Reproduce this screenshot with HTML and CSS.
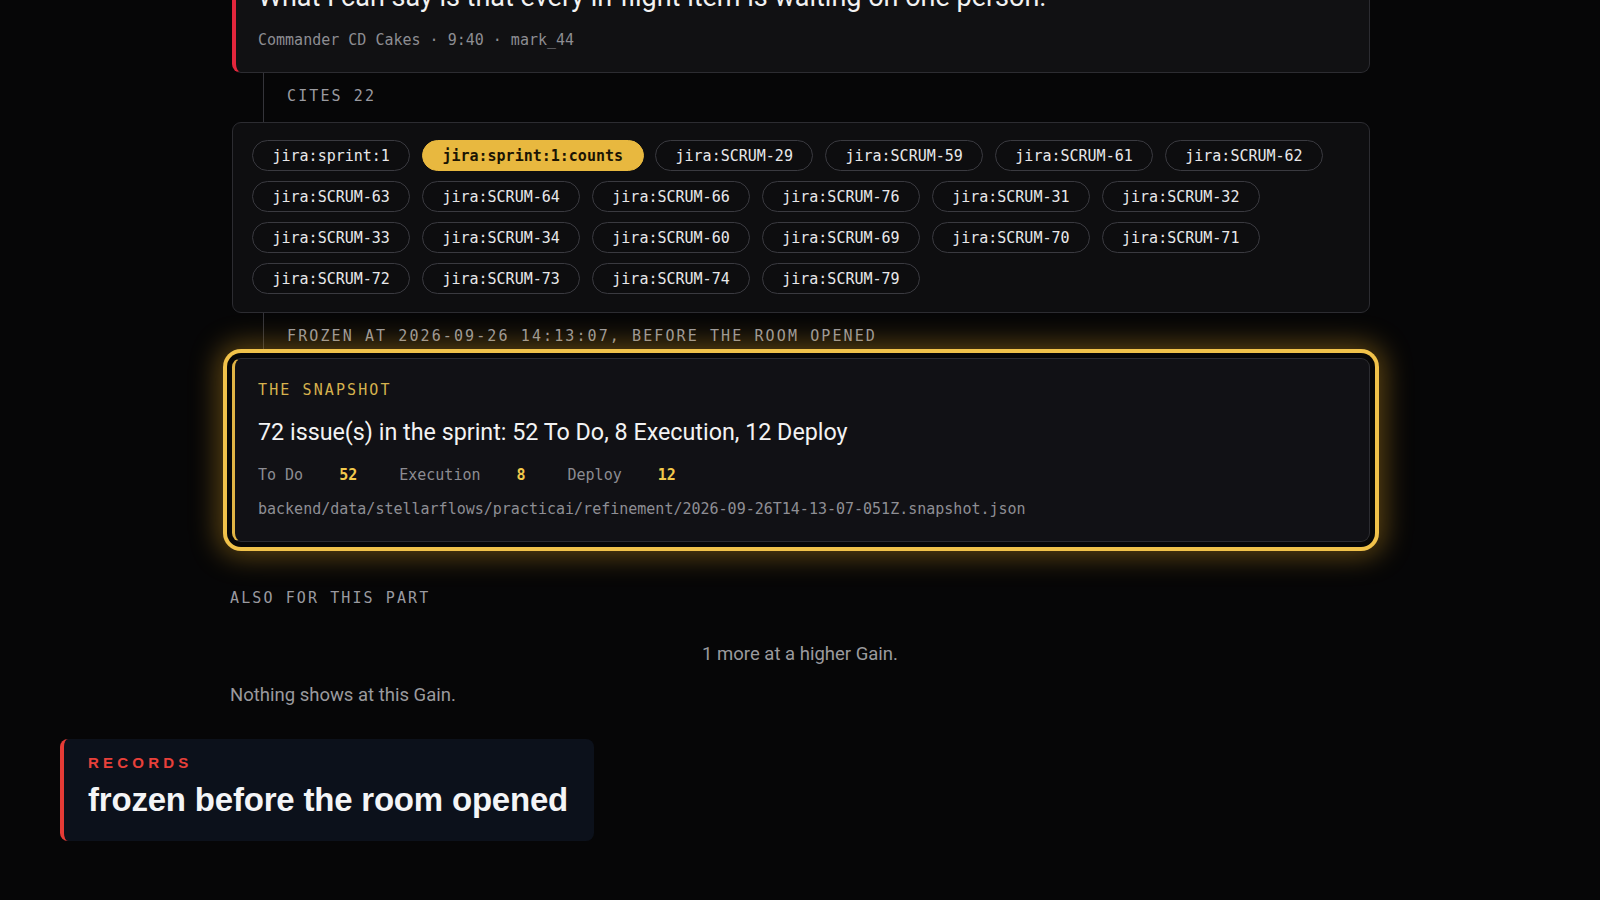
FILE: index.html
```html
<!DOCTYPE html>
<html lang="en">
<head>
<meta charset="utf-8">
<title>Records</title>
<link rel="stylesheet" href="styles.css">
</head>
<body>
<main class="page">
  <article class="card quote">
    <p class="quote-text">What I can say is that every in-flight item is waiting on one person.</p>
    <p class="meta">Commander CD Cakes · 9:40 · mark_44</p>
  </article>

  <div class="thread"><span class="label">CITES 22</span></div>

  <section class="card chips">
    <span class="chip">jira:sprint:1</span>
    <span class="chip chip-on">jira:sprint:1:counts</span>
    <span class="chip">jira:SCRUM-29</span>
    <span class="chip">jira:SCRUM-59</span>
    <span class="chip">jira:SCRUM-61</span>
    <span class="chip">jira:SCRUM-62</span>
    <span class="chip">jira:SCRUM-63</span>
    <span class="chip">jira:SCRUM-64</span>
    <span class="chip">jira:SCRUM-66</span>
    <span class="chip">jira:SCRUM-76</span>
    <span class="chip">jira:SCRUM-31</span>
    <span class="chip">jira:SCRUM-32</span>
    <span class="chip">jira:SCRUM-33</span>
    <span class="chip">jira:SCRUM-34</span>
    <span class="chip">jira:SCRUM-60</span>
    <span class="chip">jira:SCRUM-69</span>
    <span class="chip">jira:SCRUM-70</span>
    <span class="chip">jira:SCRUM-71</span>
    <span class="chip">jira:SCRUM-72</span>
    <span class="chip">jira:SCRUM-73</span>
    <span class="chip">jira:SCRUM-74</span>
    <span class="chip">jira:SCRUM-79</span>
  </section>

  <div class="thread thread-2"><span class="label">FROZEN AT 2026-09-26 14:13:07, BEFORE THE ROOM OPENED</span></div>

  <section class="card snapshot">
    <div class="label label-gold">THE SNAPSHOT</div>
    <h2 class="snap-title">72 issue(s) in the sprint: 52 To Do, 8 Execution, 12 Deploy</h2>
    <div class="stats">
      <div class="stat"><span class="stat-k">To Do</span><span class="stat-v">52</span></div>
      <div class="stat"><span class="stat-k">Execution</span><span class="stat-v">8</span></div>
      <div class="stat"><span class="stat-k">Deploy</span><span class="stat-v">12</span></div>
    </div>
    <div class="path">backend/data/stellarflows/practicai/refinement/2026-09-26T14-13-07-051Z.snapshot.json</div>
  </section>

  <section class="also">
    <div class="label">ALSO FOR THIS PART</div>
    <p class="more">1 more at a higher Gain.</p>
    <p class="none">Nothing shows at this Gain.</p>
  </section>
</main>

<aside class="caption">
  <div class="caption-kicker">RECORDS</div>
  <div class="caption-title">frozen before the room opened</div>
</aside>
</body>
</html>
```

FILE: styles.css
```css
* { box-sizing: border-box; }

html, body {
  margin: 0;
  padding: 0;
  height: 100%;
  overflow: hidden;
  background: #060607;
}

body {
  font-family: Roboto, "Liberation Sans", sans-serif;
  color: #ececec;
}

.page {
  width: 1140px;
  margin: -40px auto 0;
  display: flex;
  flex-direction: column;
}

.card {
  background: #111113;
  border: 1px solid #2c2c31;
  border-radius: 9px;
}

.quote {
  border-left: 4px solid #e3263c;
  padding: 18px 24px 22px 22px;
  margin-left: 2px;
}

.quote-text {
  margin: 0;
  font-size: 27px;
  line-height: 36px;
  color: #f2f2f2;
}

.meta {
  margin: 15px 0 0;
  font-family: "DejaVu Sans Mono", monospace;
  font-size: 15px;
  line-height: 20px;
  color: #8d8d92;
}

.thread {
  height: 49px;
  margin-left: 33px;
  border-left: 1px solid #34343a;
  padding-left: 23px;
  padding-bottom: 3px;
  display: flex;
  align-items: center;
}

.thread-2 {
  height: 45px;
  padding-top: 1px;
  padding-bottom: 0;
}

.label {
  font-family: "DejaVu Sans Mono", monospace;
  font-size: 15px;
  line-height: 20px;
  letter-spacing: 0.14em;
  color: #9a9aa0;
}

.label-gold { color: #d6b24e; }

.chips {
  margin-left: 2px;
  background: #0e0e10;
  padding: 17px 19px 18px;
  display: flex;
  flex-wrap: wrap;
  gap: 10px 11.5px;
}

.chip {
  display: inline-flex;
  align-items: center;
  height: 31px;
  padding: 0 19.5px;
  border: 1px solid #3a3a40;
  border-radius: 16px;
  font-family: "DejaVu Sans Mono", monospace;
  font-size: 15px;
  color: #e8e8ea;
  background: #0d0d0f;
}

.chip-on {
  background: #e8b83f;
  border-color: #e8b83f;
  color: #1b1403;
  font-weight: bold;
}

.snapshot {
  margin-left: 2px;
  background: #111115;
  border-left: 3px solid #e1b445;
  padding: 21px 24px 22px 23px;
  box-shadow:
    0 0 0 5px #070707,
    0 0 0 9px #f1c24a,
    0 0 28px 14px rgba(228, 165, 35, 0.4);
}

.snap-title {
  margin: 17px 0 0;
  font-weight: 400;
  font-size: 23.3px;
  line-height: 30px;
  color: #f3f3f3;
}

.stats {
  margin-top: 18px;
  display: flex;
  gap: 42px;
  font-family: "DejaVu Sans Mono", monospace;
  font-size: 15px;
  line-height: 20px;
}

.stat { display: flex; gap: 36px; }
.stat-k { color: #8c8c92; }
.stat-v { color: #f2c94c; font-weight: bold; }

.path {
  margin-top: 14px;
  font-family: "DejaVu Sans Mono", monospace;
  font-size: 15px;
  line-height: 20px;
  color: #8e8e94;
}

.also {
  margin-top: 46px;
  display: flex;
  flex-direction: column;
}

.more {
  margin: 34px 0 0;
  text-align: center;
  font-size: 18.5px;
  line-height: 24px;
  color: #9a9a9e;
}

.none {
  margin: 17px 0 0;
  font-size: 18.5px;
  line-height: 24px;
  color: #9a9a9e;
}

.caption {
  position: absolute;
  left: 60px;
  top: 739px;
  background: #0c111b;
  border-left: 4px solid #e53b36;
  border-radius: 8px;
  padding: 15px 26px 21px 24px;
  font-family: "Liberation Sans", Arial, sans-serif;
}

.caption-kicker {
  font-size: 15px;
  line-height: 18px;
  font-weight: bold;
  letter-spacing: 4.2px;
  color: #e8403a;
}

.caption-title {
  margin-top: 8px;
  font-size: 33px;
  line-height: 40px;
  font-weight: bold;
  letter-spacing: -0.2px;
  color: #f4f5f7;
}
```
